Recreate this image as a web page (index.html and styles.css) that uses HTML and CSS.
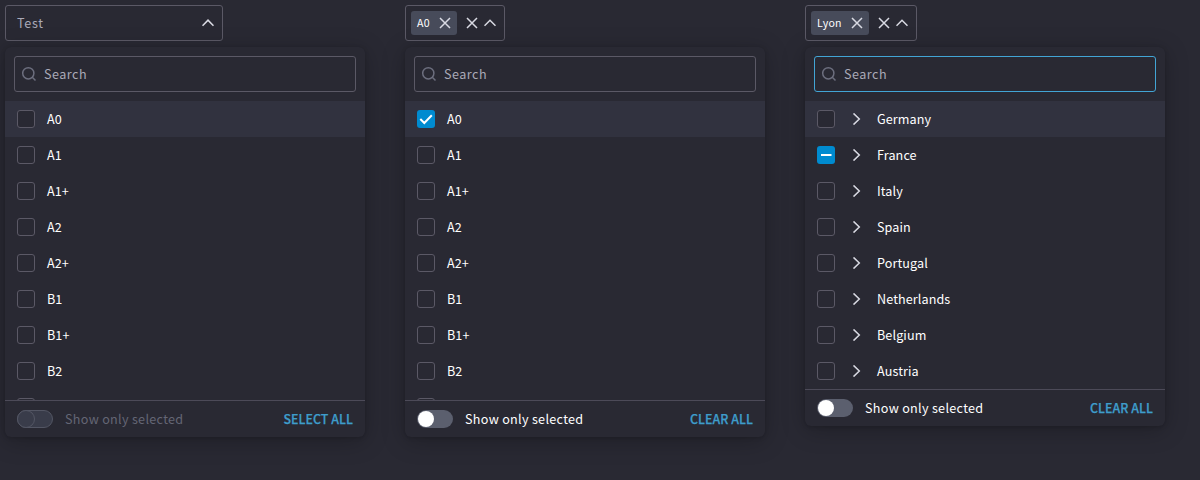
FILE: index.html
```html
<!DOCTYPE html>
<html lang="en">
<head>
<meta charset="utf-8">
<title>Multi select</title>
<link rel="stylesheet" href="styles.css">
</head>
<body>
<svg class="defs" width="0" height="0">
  <symbol id="up" viewBox="0 0 12 12"><path d="M.5 8.800 6 3.200l5.500 5.600"/></symbol>
  <symbol id="right" viewBox="0 0 12 12"><path d="M3.500.4 9.300 6l-5.800 5.600"/></symbol>
  <symbol id="close" viewBox="0 0 12 12"><path d="m1 1 10 10M11 1 1 11"/></symbol>
  <symbol id="search" viewBox="0 0 16 16"><circle cx="7.3" cy="7.3" r="5.6"/><path d="m11.3 11.3 3.2 3.2"/></symbol>
  <symbol id="check" viewBox="0 0 18 18"><path d="m3.3 9 4 4 7.500-7.700"/></symbol>
  <symbol id="minus" viewBox="0 0 18 18"><path d="M4 9h10.500"/></symbol>
</svg>
<main class="board" id="board"></main>
<script src="script.js"></script>
</body>
</html>
```

FILE: script.js
```js
const grades = ['A0', 'A1', 'A1+', 'A2', 'A2+', 'B1', 'B1+', 'B2', ''];
const countries = ['Germany', 'France', 'Italy', 'Spain', 'Portugal', 'Netherlands', 'Belgium', 'Austria'];

const selects = [
  { placeholder: 'Test', items: grades, states: {}, action: 'SELECT ALL', disabled: true },
  { chip: 'A0', items: grades, states: { A0: 'check' }, action: 'CLEAR ALL' },
  { chip: 'Lyon', items: countries, states: { France: 'minus' }, action: 'CLEAR ALL', tree: true, focused: true }
];

const icon = (name, cls = '') => `<svg class="icon icon-${name} ${cls}"><use href="#${name}"/></svg>`;

const trigger = s => s.chip
  ? `<div class="trigger trigger-filled"><span class="chip"><span class="chip-text">${s.chip}</span>${icon('close')}</span><span class="clear">${icon('close')}</span>${icon('up')}</div>`
  : `<div class="trigger trigger-empty"><span class="placeholder">${s.placeholder}</span>${icon('up', 'strong')}</div>`;

const row = (s, item) => {
  const state = s.states[item];
  return `<li class="row"><span class="box ${state ? 'box-on' : ''}">${state ? icon(state) : ''}</span>${s.tree ? icon('right') : ''}<span class="label">${item}</span></li>`;
};

document.getElementById('board').innerHTML = selects.map(s => `
  <section class="select">
    ${trigger(s)}
    <div class="panel">
      <div class="search ${s.focused ? 'search-focused' : ''}">${icon('search')}<span class="search-text">Search</span></div>
      <ul class="list ${s.tree ? 'list-tree' : ''}">${s.items.map(i => row(s, i)).join('')}</ul>
      <div class="footer ${s.disabled ? 'footer-disabled' : ''}">
        <span class="toggle"><span class="knob"></span></span>
        <span class="footer-text">Show only selected</span>
        <span class="action">${s.action}</span>
      </div>
    </div>
  </section>`).join('');
```

FILE: styles.css
```css
* { box-sizing: border-box; }
body {
  margin: 0;
  height: 480px;
  overflow: hidden;
  background: #292933;
  color: #fff;
  font: 12.6px/20px "Noto Sans CJK SC", "Noto Sans", sans-serif;
  letter-spacing: 0.1px;
}
.defs { position: absolute; }
.board { display: grid; grid-template-columns: repeat(3, 400px); padding-top: 5px; }
.select { padding-left: 5px; }
.icon { flex: none; display: block; width: 12px; height: 12px; fill: none; stroke: #d9dae3; stroke-width: 1.5; }
.trigger { display: flex; align-items: center; height: 36px; border: 1px solid #5b5966; border-radius: 3px; }
.trigger-empty { width: 218px; justify-content: space-between; padding: 0 8px 0 11px; }
.trigger-filled { width: max-content; padding: 0 8px 0 5px; }
.placeholder, .search-text { color: #a9a9b8; letter-spacing: 0.5px; }
.placeholder { letter-spacing: 0.7px; }
.icon-up.strong { stroke-width: 1.6; }
.chip { display: flex; align-items: center; gap: 9px; height: 24px; padding: 0 6px; border-radius: 3px; background: #474b5a; }
.chip-text { font-size: 10.6px; letter-spacing: 0.3px; }
.clear { margin: 0 6px 0 9px; }
.panel {
  width: 360px;
  margin-top: 6px;
  border-radius: 6px;
  overflow: hidden;
  background: #292933;
  box-shadow: 0 4px 24px rgba(0, 0, 0, 0.24), 0 1px 4px rgba(0, 0, 0, 0.16);
}
.search { display: flex; align-items: center; gap: 7px; height: 36px; margin: 9px; padding-left: 6px; border: 1px solid #5b5966; border-radius: 3px; }
.search-focused { border-color: #42a5d5; }
.icon-search { width: 16px; height: 16px; stroke: #6c6e7e; }
.list { height: 299px; margin: 0; padding: 0; overflow: hidden; list-style: none; }
.list-tree { height: 288px; }
.row { display: flex; align-items: center; gap: 12px; height: 36px; padding: 0 12px; }
.row:first-child { background: #31323f; }
.box { display: flex; width: 18px; height: 18px; border: 1px solid #5b5966; border-radius: 3px; background: #292933; }
.box-on { border: 0; background: #008bd0; }
.icon-check, .icon-minus { width: 18px; height: 18px; stroke: #fff; stroke-width: 2; }
.icon-right { margin: 0 3px; }
.footer { display: flex; align-items: center; height: 37px; padding: 0 12px; border-top: 1px solid #4c4a58; }
.toggle { width: 36px; height: 18px; padding: 1px; border-radius: 9px; background: #5b5f6e; }
.knob { display: block; width: 16px; height: 16px; border-radius: 50%; background: #fff; }
.footer-text { margin-left: 12px; letter-spacing: 0.3px; }
.action { margin-left: auto; color: #3e9dcb; font-size: 12.4px; font-weight: 500; letter-spacing: 0.05px; -webkit-text-stroke: 0.25px #3e9dcb; }
.footer-disabled .footer-text { color: #646675; }
.footer-disabled .toggle { padding: 0; border: 1px solid #535664; background: #393c4a; }
.footer-disabled .knob { width: 18px; height: 18px; margin: -1px; border: 1px solid #535664; background: #393c4a; }
```
